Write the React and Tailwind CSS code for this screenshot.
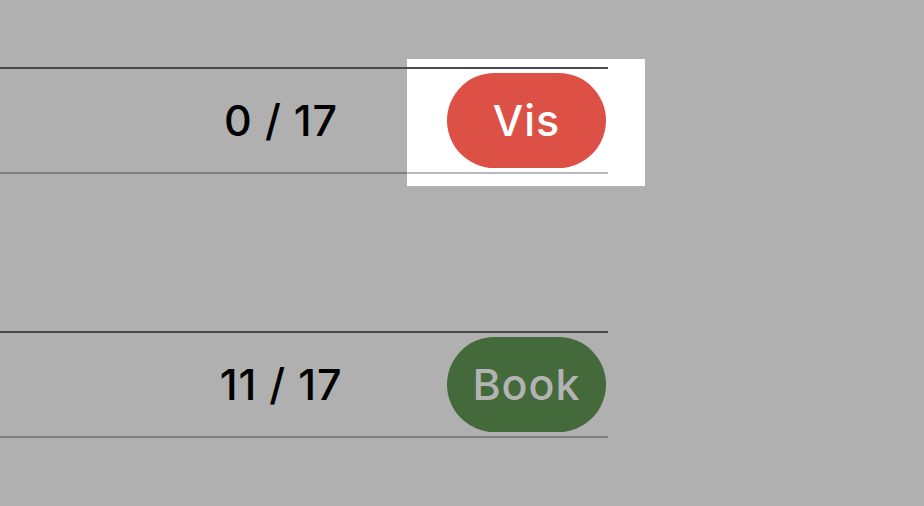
export default function App() {
  const rows = [
    { count: "0 / 17", label: "Vis", tone: "bg-[#dc5045] text-white", highlight: true },
    { count: "11 / 17", label: "Book", tone: "bg-[#446a3c] text-[#b3b3b3]", highlight: false },
  ];

  return (
    <div className="min-h-[506px] w-[924px] bg-[#b0b0b0] pt-[67px] font-['Inter',sans-serif]">
      <div className="flex w-[608px] flex-col gap-[157px]">
        {rows.map((row) => (
          <div key={row.label} className="relative">
            {/* white highlight box behind the button cell */}
            {row.highlight && (
              <div className="absolute left-[407px] top-[-8px] h-[127px] w-[238px] bg-white" />
            )}
            <div className="relative flex h-[107px] items-center border-t-2 border-b-2 border-t-[#4a4a4a] border-b-[rgba(0,0,0,0.27)]">
              <div className="ml-[161px] w-[240px] text-center text-[43px] leading-none font-[450] tracking-[0.8px] text-black">
                {row.count}
              </div>
              <button
                className={`ml-auto mr-[2px] flex h-[95px] w-[159px] items-center justify-center rounded-full text-[43px] leading-none font-[450] tracking-[1px] ${row.tone}`}
              >
                {row.label}
              </button>
            </div>
          </div>
        ))}
      </div>
    </div>
  );
}
